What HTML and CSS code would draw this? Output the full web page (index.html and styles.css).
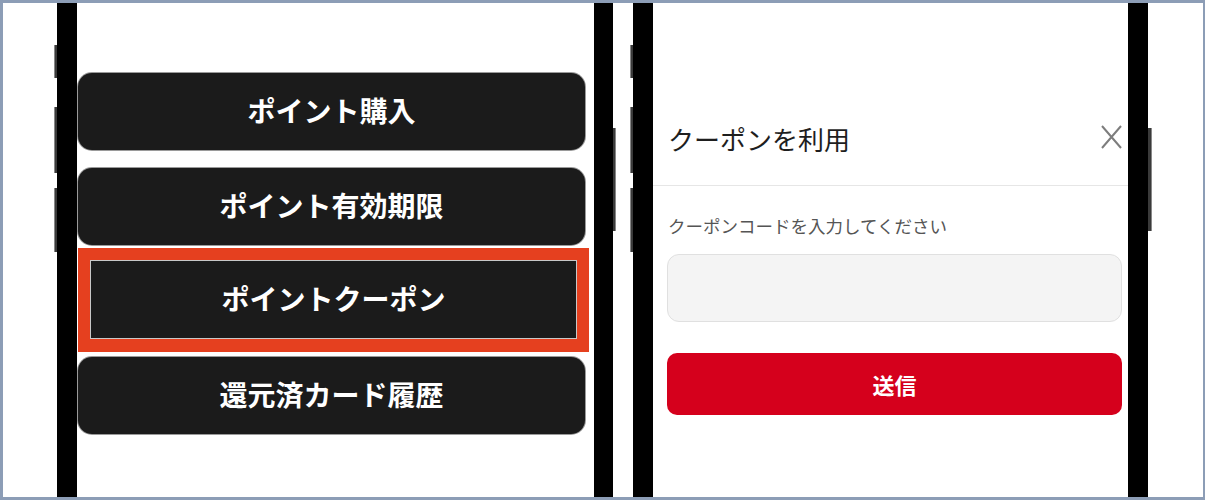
FILE: index.html
```html
<!DOCTYPE html>
<html lang="ja">
<head>
    <meta charset="UTF-8">
    <meta name="viewport" content="width=device-width, initial-scale=1.0">
    <title>ポイントクーポン</title>
    <link rel="stylesheet" href="styles.css">
</head>
<body>
    <div class="frame">
        <div class="phone">
            <div class="keys">
                <span class="key key-a"></span>
                <span class="key key-b"></span>
                <span class="key key-c"></span>
            </div>
            <div class="bezel"></div>
            <div class="screen menu">
                <div class="menu-btn">ポイント購入</div>
                <div class="menu-btn">ポイント有効期限</div>
                <div class="highlight">
                    <div class="menu-btn">ポイントクーポン</div>
                </div>
                <div class="menu-btn last">還元済カード履歴</div>
            </div>
            <div class="bezel bezel-thin"></div>
            <div class="keys keys-side">
                <span class="key key-power"></span>
            </div>
        </div>

        <div class="phone phone-second">
            <div class="keys">
                <span class="key key-a"></span>
                <span class="key key-b"></span>
                <span class="key key-c"></span>
            </div>
            <div class="bezel"></div>
            <div class="screen coupon">
                <div class="coupon-head">
                    <h2>クーポンを利用</h2>
                    <svg class="close" width="21" height="24" viewBox="0 0 21 24">
                        <path d="M1 1 L20 23 M20 1 L1 23" stroke="#7d7d7d" stroke-width="2" fill="none"/>
                    </svg>
                </div>
                <div class="coupon-body">
                    <p class="coupon-label">クーポンコードを入力してください</p>
                    <div class="coupon-input"></div>
                    <div class="coupon-submit">送信</div>
                </div>
            </div>
            <div class="bezel"></div>
            <div class="keys keys-side wide">
                <span class="key key-power"></span>
            </div>
        </div>
    </div>
</body>
</html>
```

FILE: styles.css
```css
body {
    margin: 0;
    font-family: "Noto Sans CJK JP", "Noto Sans", sans-serif;
    background-color: #fff;
}

.frame {
    width: 1205px;
    height: 500px;
    box-sizing: border-box;
    border: 3px solid #8c9db6;
    border-right-width: 2px;
    padding-left: 51px;
    display: flex;
    background-color: #fff;
}

.phone {
    display: flex;
    height: 100%;
}

.phone-second {
    margin-left: 14px;
}

/* side keys */
.keys {
    width: 3px;
    display: flex;
    flex-direction: column;
}
.keys.wide {
    width: 4px;
}
.key {
    display: block;
    background-color: #3a3a3a;
    border-left: 1px solid #888;
}
.key-a {
    margin-top: 42px;
    height: 33px;
}
.key-b {
    margin-top: 29px;
    height: 66px;
}
.key-c {
    margin-top: 15px;
    height: 64px;
}
.keys-side .key {
    border-left: none;
    border-right: 1px solid #888;
}
.key-power {
    margin-top: 125px;
    height: 103px;
}

.bezel {
    width: 20px;
    background-color: #000;
}
.bezel-thin {
    width: 19px;
}

.screen {
    background-color: #fff;
}

/* left: menu */
.menu {
    width: 517px;
    box-sizing: border-box;
    padding: 70px 9px 0 1px;
    display: flex;
    flex-direction: column;
}

.menu-btn {
    height: 77px;
    box-sizing: border-box;
    padding-bottom: 3px;
    border-radius: 14px;
    background-color: #1b1b1b;
    color: #fff;
    font-size: 28px;
    font-weight: 700;
    display: flex;
    align-items: center;
    justify-content: center;
    box-shadow: 0 0 0 1px #9a9a9a;
}
.menu-btn + .menu-btn {
    margin-top: 18px;
}

.highlight {
    margin: 3px -4px 0 0;
    border: 12px solid #e5401f;
    border-bottom-width: 13px;
    padding: 1px;
    background-color: #c8c8c8;
}
.highlight .menu-btn {
    border-radius: 0;
    box-shadow: none;
}
.menu-btn.last {
    margin-top: 5px;
}

/* right: coupon */
.coupon {
    width: 475px;
    display: flex;
    flex-direction: column;
}

.coupon-head {
    display: flex;
    align-items: center;
    justify-content: space-between;
    padding: 116px 6px 26px 15px;
    border-bottom: 1px solid #e6e6e6;
}
.coupon-head h2 {
    margin: 0;
    font-size: 26px;
    line-height: 40px;
    font-weight: 400;
    color: #1e1e1e;
}
.close {
    margin-bottom: 4px;
}

.coupon-body {
    padding: 28px 6px 0 14px;
}

.coupon-label {
    margin: 0 0 0 1px;
    font-size: 17.5px;
    line-height: 24px;
    color: #555;
}

.coupon-input {
    margin-top: 16px;
    height: 68px;
    box-sizing: border-box;
    border: 1px solid #e0e0e0;
    border-radius: 12px;
    background-color: #f4f4f4;
}

.coupon-submit {
    margin-top: 31px;
    height: 62px;
    border-radius: 10px;
    background-color: #d5001c;
    color: #fff;
    font-size: 22px;
    font-weight: 700;
    display: flex;
    align-items: center;
    justify-content: center;
}
```
